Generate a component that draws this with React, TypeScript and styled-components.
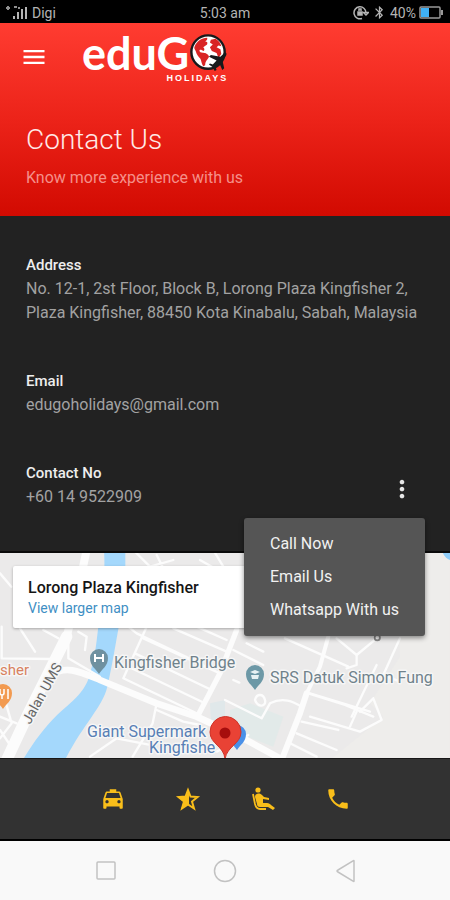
import React from "react";
import styled, { createGlobalStyle } from "styled-components";
import {
  MdBluetooth,
  MdLocalTaxi,
  MdMenu,
  MdMoreVert,
  MdPhone,
} from "react-icons/md";

const GlobalStyle = createGlobalStyle`
  * { box-sizing: border-box; }
  body {
    margin: 0;
    background: #222222;
    font-family: Roboto, "Liberation Sans", sans-serif;
  }
  button {
    border: 0;
    padding: 0;
    background: none;
    font: inherit;
    color: inherit;
    cursor: pointer;
  }
  svg { display: block; }
`;

const Screen = styled.div`
  display: flex;
  flex-direction: column;
  min-height: 100vh;
`;

const StatusBar = styled.div`
  display: grid;
  grid-template-columns: 1fr auto 1fr;
  align-items: center;
  height: 23px;
  padding: 2px 6px 0 6px;
  background: #000000;
  color: #b4b4b4;
  font-size: 14px;
`;

const StatusGroup = styled.div<{ $end?: boolean }>`
  display: flex;
  align-items: center;
  justify-content: ${(p) => (p.$end ? "flex-end" : "flex-start")};
  gap: 3px;
`;

const Header = styled.header`
  padding: 10px 20px 28px;
  background: linear-gradient(#ff3c31, #ec2319 50%, #d20a01);
  color: #ffffff;
`;

const Toolbar = styled.div`
  display: flex;
  align-items: flex-start;
  gap: 34px;
  height: 89px;
`;

const MenuButton = styled.button`
  display: flex;
  margin-top: 10px;
`;

const Brand = styled.div`
  display: grid;
  grid-template-columns: auto auto;
  justify-content: start;
`;

const BrandName = styled.span`
  height: 40px;
  font: 700 45px/40px Lato, sans-serif;
`;

const BrandTag = styled.span`
  grid-column: 1 / -1;
  justify-self: end;
  font: 900 9px/10px "Liberation Sans", sans-serif;
  letter-spacing: 2px;
`;

const Title = styled.h1`
  margin: 0 6px;
  font-size: 28px;
  font-weight: 300;
  line-height: 36px;
  color: #ffe9e7;
`;

const Subtitle = styled.p`
  margin: 10px 6px 0;
  font-size: 16px;
  line-height: 20px;
  color: #f58f89;
`;

const Details = styled.main`
  display: flex;
  flex-direction: column;
  gap: 44px;
  padding: 37px 26px 44px;
  background: #222222;
  box-shadow: inset 0 -2px #0a0a0a;
`;

const Detail = styled.section`
  position: relative;
  display: flex;
  align-items: center;
  justify-content: space-between;
`;

const DetailName = styled.h2`
  margin: 0;
  font-size: 15px;
  font-weight: 500;
  line-height: 24px;
  color: #eeeeee;
`;

const DetailText = styled.p`
  margin: 0;
  font-size: 16px;
  line-height: 24px;
  color: #a2a2a2;
`;

const MoreButton = styled.button`
  display: flex;
  margin-right: 8px;
  margin-top: 8px;
  color: #e6e6e6;
`;

const Menu = styled.div`
  position: absolute;
  z-index: 2;
  top: 57px;
  right: -1px;
  display: flex;
  flex-direction: column;
  width: 181px;
  padding: 9px 0 10px;
  border-radius: 3px;
  background: #555555;
  box-shadow: 0 2px 5px rgba(0, 0, 0, 0.45);
`;

const MenuItem = styled.button`
  padding: 0 0 0 26px;
  text-align: left;
  white-space: nowrap;
  font-size: 16px;
  line-height: 33px;
  color: #f1f1f1;
`;

const MapArea = styled.section`
  position: relative;
  height: 205px;
  background: #ebeaea;
  overflow: hidden;
`;

const MapDrawing = styled.svg`
  width: 100%;
  height: 100%;
  font-family: Roboto, sans-serif;
  font-size: 16px;
`;

const MapCard = styled.div`
  position: absolute;
  top: 13px;
  left: 13px;
  width: 280px;
  height: 62px;
  padding: 11px 15px;
  border-radius: 2px;
  background: #ffffff;
  box-shadow: 0 1px 3px rgba(0, 0, 0, 0.3);
`;

const PlaceName = styled.div`
  font-size: 16px;
  font-weight: 500;
  line-height: 21px;
  color: #151515;
`;

const MapLink = styled.a`
  display: block;
  font-size: 14px;
  line-height: 20px;
  color: #3f8fc4;
  text-decoration: none;
`;

const TabBar = styled.nav`
  display: grid;
  grid-template-columns: repeat(6, 1fr);
  align-items: center;
  height: 83px;
  background: #323232;
  border-top: 1px solid #171717;
  border-bottom: 2px solid #000000;
`;

const Tab = styled.button`
  display: flex;
  justify-content: center;
  color: #f9be1a;

  &:first-child { grid-column-start: 2; }
`;

const SystemBar = styled.nav`
  display: grid;
  grid-template-columns: repeat(3, 1fr);
  flex: 1;
  align-items: center;
  min-height: 59px;
  padding: 0 10%;
  background: #f9f9f9;
`;

const SystemButton = styled.button`
  display: flex;
  justify-content: center;
`;

function SignalIcon() {
  return (
    <svg width="23" height="16" viewBox="0 0 23 16" fill="#b4b4b4" aria-hidden="true">
      <path d="M0 2h4v2H0zM1 1h2v4H1zM8 1h3v2H8zM12 2h2v2h-2z" opacity=".8" />
      <path d="M7 11h2v3H7zM11 7h2v7h-2zM15 4h2v10h-2zM19 2h2v12h-2z" />
    </svg>
  );
}

function RotationLockIcon() {
  return (
    <svg width="16" height="15" viewBox="0 0 16 15" fill="none" stroke="#b4b4b4" strokeWidth="1.5" aria-hidden="true">
      <path d="M9 13.5A6 6 0 1 1 13 8M10.5 7.500h5L13 10z" />
      <path d="M5 7h4v3H5z" fill="#b4b4b4" />
      <path d="M6 6V4h2v2" />
    </svg>
  );
}

function BatteryIcon() {
  return (
    <svg width="25" height="13" viewBox="0 0 25 13" role="img" aria-label="Battery">
      <rect x="1" y="1" width="20" height="11" rx="1" fill="none" stroke="#999" strokeWidth="1.5" />
      <rect x="2" y="2" width="8" height="9" fill="#3fb0f4" />
      <rect x="22" y="4" width="2" height="5" fill="#999" />
    </svg>
  );
}

function GlobeIcon() {
  return (
    <svg width="39" height="40" viewBox="0 0 41 42" role="img" aria-label="O">
      <circle cx="20" cy="20" r="17.5" fill="#fff" stroke="#17191b" strokeWidth="2.5" />
      <path
        fill="#d92424"
        d="M6 14c2-5 7-9 13-9 1 2-1 3-2 4 2 0 3 1 2 3l-4 3c1 1 2 3 0 4-1-1-3-2-4-1 0 3 3 2 5 3 2 0 5 2 5 4-1 3-4 4-4 9l-2 1c-2-3-2-6-3-8-2-2-4-4-5-8-1-2-2-3-1-5zM23 7l5-1c3 2 5 4 6 8l-3-1-2 2 4 2 1 5-3 4-2-5-5-2-2-4 3-3-3-2z"
      />
      <path
        fill="#17191b"
        d="M39 21c-1-1-2 0-3 1l-3 3-10-2-2 2 8 4-4 4-3-1-1 1 4 3 2 4 2-1-1-3 4-4 3 7 2-2-2-9 3-3c1-1 2-3 1-4z"
      />
    </svg>
  );
}

function TaxiIcon() {
  return <MdLocalTaxi size={26} />;
}

function HalfStarIcon() {
  return (
    <svg width="26" height="26" viewBox="0 0 26 26" stroke="currentColor" strokeWidth="2" aria-hidden="true">
      <path fill="none" d="M13 4l2.5 6.500 7 .5-5.500 4.500 2 7L13 18.500 7 22.500l2-7L3.500 11l7-.5z" />
      <path fill="currentColor" stroke="none" d="M14 3v15l-8 5 3-7-6-5 8-1z" />
    </svg>
  );
}

function SeatIcon() {
  return (
    <svg width="26" height="26" viewBox="0 0 26 26" fill="currentColor" aria-hidden="true">
      <circle cx="8" cy="4" r="2.6" />
      <path d="M7 8c2-1 4 0 5 1l2 2 5 1v2l-6-1v4h4c2 0 3 1 4 2l4 3-2 2-5-3H10c-2 0-3-1-3-3L5 11c0-2 1-3 2-3z" />
      <path d="M3 8l2 10c1 4 3 5 5 5h6" fill="none" stroke="currentColor" strokeWidth="1.8" />
    </svg>
  );
}

function PhoneIcon() {
  return <MdPhone size={26} />;
}

/* Street plan, in units of a third of a pixel. */
function Streets() {
  return (
    <g transform="translate(0 -3) scale(.3333)" fill="none" strokeLinejoin="round" strokeLinecap="round">
      <path fill="#eeedeb" d="M1190 0h160v630H990L1150 500 1110 460 1200 320z" />
      <path fill="#e2eae9" d="M690 480l60-20 100 40-30 90-130-50z" />
      <path fill="#e0e8ea" d="M630 460l45-10v60l-40 30z" />
      <path fill="#a4d8fc" d="M312 0h64c0 70 2 120-14 200-12 60-20 120-40 210-14 60-70 110-124 214H72c30-50 60-90 100-130 60-50 90-80 100-130 18-60 20-120 30-190 8-70 14-110 10-174z" />
      <path fill="#90cdf8" d="M1325 0h30v32c-14-4-24-14-30-32z" />
      <g stroke="#fcfcfc">
        <path strokeWidth="34" d="M20 630L90 480 200 260" />
        <path strokeWidth="24" d="M200 260L230 140 260 0" />
        <path strokeWidth="20" d="M150 375c50-30 90-10 150 15L470 460 590 500 720 560 840 625" />
        <path strokeWidth="18" d="M845 630L900 490 920 430" />
        <path strokeWidth="12" d="M920 430L960 350 985 260" />
        <path strokeWidth="16" d="M592 500L660 370 710 240" />
        <g strokeWidth="7">
          <path d="M0 70l34 40M60 235l45 70M5 230v95l150 2M130 240l45 25M235 245l25 15-5 40" />
          <path d="M205 270v55l95 55M470 460l-12 60-60 100M470 480l80 35 50 10M270 620l80-55 100 20M15 450l20 70-35 45M0 500l50 20M0 540l40 60" />
          <path d="M385 230l25 20 200 95M440 230l-70 155 220 105M430 265l230 105M405 310l230 110M395 355l220 105M520 235l160 70M590 230l90 40" />
          <path d="M400 0l50 50 70-20M470 15l20 40M600 30l70 40M640 0l30 50" />
          <path d="M700 300l90 45M925 430l110 35 85 35M740 280l50 25M855 265l190 85M1010 265l60 50 60-50" />
          <path d="M1070 315v30l-30 10M1200 265l-50 110 50 20M1055 500l75-155M1120 445l25 65-65 35-150-45M1120 445l-40 40" />
          <path d="M1050 530l20-45M930 430l180 55M905 515l110 25M890 550l120 50M870 580l80 40" />
          <path d="M675 450l110 55 25-45c40-20 70-5 95 10M765 450c5-20 25-20 30 0s-20 25-30 0M650 605l95-50M700 390l18 8" />
        </g>
      </g>
      <circle cx="1132" cy="263" r="8" stroke="#888" strokeWidth="5" />
    </g>
  );
}

const PIN = "M0 13C-3 8-9 5-9-3a9 9 0 0 1 18 0C9 5 3 8 0 13z";

function StreetMap() {
  return (
    <MapDrawing viewBox="0 0 450 205" preserveAspectRatio="xMidYMid slice">
      <Streets />
      <g stroke="#f6f6f6" strokeWidth="3" paintOrder="stroke" strokeLinejoin="round">
        <text x="0" y="122" fontSize="15" fill="#d8815e">sher</text>
        <text x="114" y="115" fill="#70828b">Kingfisher Bridge</text>
        <text x="270" y="130" fill="#70828b">SRS Datuk Simon Fung</text>
        <text x="87" y="184" fill="#587fb5">Giant Supermark</text>
        <text x="149" y="200" fill="#587fb5">Kingfishe</text>
        <text transform="translate(30 172) rotate(-61)" fontSize="14" fill="#666">Jalan UMS</text>
      </g>
      <g transform="translate(99 107)">
        <path d={PIN} transform="translate(0 1)" fill="#6f91a0" />
        <path d="M-4-6v8M4-6v8M-4-2h8" stroke="#fff" strokeWidth="2" fill="none" />
      </g>
      <g transform="translate(255 124)">
        <path d={PIN} fill="#6c98a6" />
        <path d="M-5-5l5-2 5 2-5 2zM-4-2h8l-1 4h-6z" fill="#e7f2f3" />
      </g>
      <g transform="translate(3 143)">
        <path d={PIN} fill="#f29a50" />
        <path d="M-3-7v4q0 2 2 2v4M1-7v4q0 2-2 2M5 3v-10" stroke="#fff" strokeWidth="1.5" fill="none" />
      </g>
      <path d={PIN} transform="translate(237 184)" fill="#4a90e8" />
      <path
        d="M225 206c-1-13-15-15-15-27a15 15 0 0 1 31 0c0 12-14 14-16 27z"
        fill="#e94235"
        stroke="#cf3429"
      />
      <circle cx="225" cy="180" r="5.5" fill="#a60d0d" />
    </MapDrawing>
  );
}

const MENU_OPTIONS = ["Call Now", "Email Us", "Whatsapp With us"];

const TABS = [
  { label: "Taxi", Icon: TaxiIcon },
  { label: "Reviews", Icon: HalfStarIcon },
  { label: "Seats", Icon: SeatIcon },
  { label: "Call", Icon: PhoneIcon },
];

const SYSTEM_BUTTONS = [
  { label: "Recent apps", shape: <rect x="5" y="4" width="18" height="17" rx="1" /> },
  { label: "Home", shape: <circle cx="13" cy="13" r="10.5" /> },
  { label: "Back", shape: <path d="M22 3v20q0 1-1 0L6 14q-2-1 0-2L21 3q1-1 1 0z" /> },
];

export default function App() {
  return (
    <Screen>
      <GlobalStyle />
      <StatusBar>
        <StatusGroup>
          <SignalIcon />
          <span>Digi</span>
        </StatusGroup>
        <span>5:03 am</span>
        <StatusGroup $end>
          <RotationLockIcon />
          <MdBluetooth size={15} />
          <span>40%</span>
          <BatteryIcon />
        </StatusGroup>
      </StatusBar>

      <Header>
        <Toolbar>
          <MenuButton aria-label="Open navigation">
            <MdMenu size={28} />
          </MenuButton>
          <Brand>
            <BrandName>eduG</BrandName>
            <GlobeIcon />
            <BrandTag>HOLIDAYS</BrandTag>
          </Brand>
        </Toolbar>
        <Title>Contact Us</Title>
        <Subtitle>Know more experience with us</Subtitle>
      </Header>

      <Details>
        <Detail>
          <div>
            <DetailName>Address</DetailName>
            <DetailText>
              No. 12-1, 2st Floor, Block B, Lorong Plaza Kingfisher 2, Plaza Kingfisher, 88450 Kota
              Kinabalu, Sabah, Malaysia
            </DetailText>
          </div>
        </Detail>
        <Detail>
          <div>
            <DetailName>Email</DetailName>
            <DetailText>edugoholidays@gmail.com</DetailText>
          </div>
        </Detail>
        <Detail>
          <div>
            <DetailName>Contact No</DetailName>
            <DetailText>+60 14 9522909</DetailText>
          </div>
          <MoreButton aria-label="Contact options" aria-expanded="true">
            <MdMoreVert size={28} />
          </MoreButton>
          <Menu role="menu">
            {MENU_OPTIONS.map((option) => (
              <MenuItem key={option} role="menuitem">
                {option}
              </MenuItem>
            ))}
          </Menu>
        </Detail>
      </Details>

      <MapArea aria-label="Map">
        <StreetMap />
        <MapCard>
          <PlaceName>Lorong Plaza Kingfisher</PlaceName>
          <MapLink href="#map">View larger map</MapLink>
        </MapCard>
      </MapArea>

      <TabBar>
        {TABS.map(({ label, Icon }) => (
          <Tab key={label} aria-label={label}>
            <Icon />
          </Tab>
        ))}
      </TabBar>

      <SystemBar>
        {SYSTEM_BUTTONS.map(({ label, shape }) => (
          <SystemButton key={label} aria-label={label}>
            <svg width="26" height="26" viewBox="0 0 26 26" fill="none" stroke="#c2c2c2" strokeWidth="1.5">
              {shape}
            </svg>
          </SystemButton>
        ))}
      </SystemBar>
    </Screen>
  );
}
